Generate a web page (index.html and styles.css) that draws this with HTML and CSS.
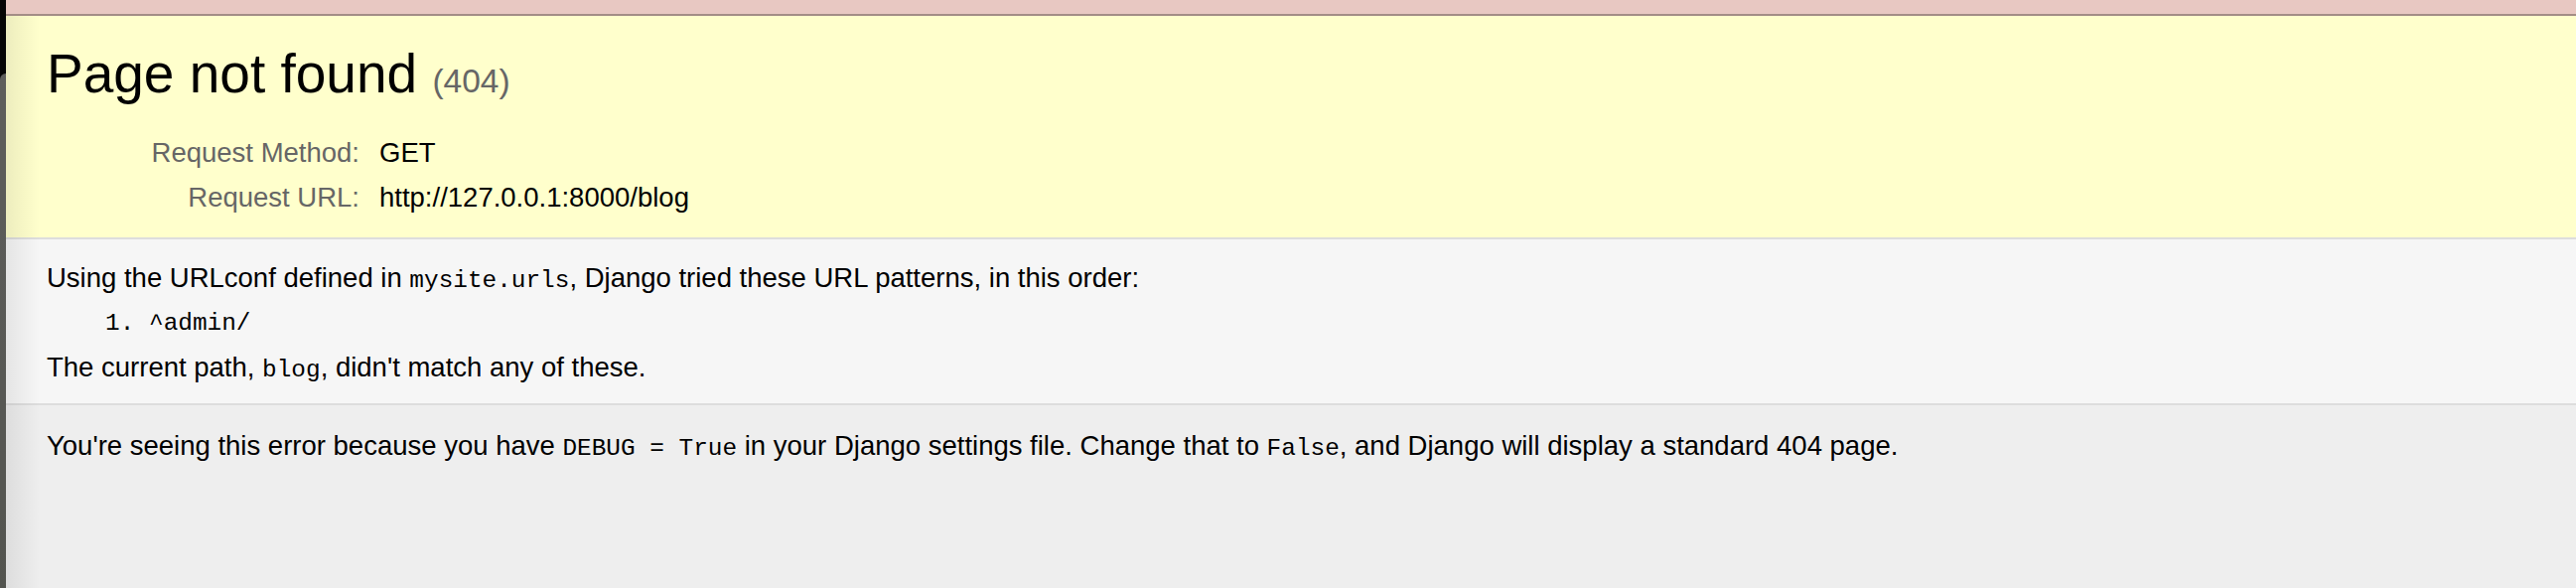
FILE: index.html
```
<!DOCTYPE html>
<html>
<head>
<meta charset="utf-8">
<title>Page not found at /blog</title>
<link rel="stylesheet" href="styles.css">
</head>
<body>
<div class="edge"><div class="edge-window"></div></div>
<div class="edge-shadow"></div>
<div class="topbar"></div>
<div class="summary">
  <h1 class="title">Page not found <span class="code">(404)</span></h1>
  <table class="meta">
    <tr><th>Request Method:</th><td>GET</td></tr>
    <tr><th>Request URL:</th><td>http://127.0.0.1:8000/blog</td></tr>
  </table>
</div>
<div class="info">
  <p class="line">Using the URLconf defined in <code class="mono">mysite.urls</code>, Django tried these URL patterns, in this order:</p>
  <ol class="patterns">
    <li class="pattern">^admin/</li>
  </ol>
  <p class="line">The current path, <code class="mono">blog</code>, didn't match any of these.</p>
</div>
<div class="explanation">
  <p class="line">You're seeing this error because you have <code class="mono">DEBUG = True</code> in your Django settings file. Change that to <code class="mono">False</code>, and Django will display a standard 404 page.</p>
</div>
</body>
</html>
```
FILE: styles.css
```
html, body {
  margin: 0;
  padding: 0;
}
body {
  font-family: "Liberation Sans", Arial, sans-serif;
  font-size: 27.5px;
  color: #000;
  background: #eee;
  height: 592px;
  overflow: hidden;
  position: relative;
}
.edge {
  position: absolute;
  left: 0;
  top: 0;
  width: 6px;
  height: 592px;
  background: #050505;
  z-index: 3;
  overflow: hidden;
}
.edge-window {
  margin-top: 74px;
  height: 518px;
  width: 20px;
  border-top-left-radius: 6px;
  background: linear-gradient(#5e5e5c, #53544f);
}
.edge-shadow {
  position: absolute;
  left: 6px;
  top: 16px;
  width: 34px;
  height: 576px;
  background: linear-gradient(to right, rgba(0,0,0,0.07), rgba(0,0,0,0));
  z-index: 2;
  pointer-events: none;
}
.topbar {
  height: 14px;
  background: #e8c8c2;
  border-bottom: 2px solid #a38d86;
}
.summary {
  background: #ffc;
  padding: 27px 47px 18px;
  border-bottom: 2px solid #ddd;
}
.title {
  margin: 0 0 18px;
  font-size: 55px;
  font-weight: normal;
  line-height: 62px;
}
.code {
  font-size: 33.5px;
  color: #666;
}
.meta {
  border-collapse: collapse;
}
.meta th, .meta td {
  padding: 0;
  height: 45px;
  line-height: 45px;
  vertical-align: top;
  font-size: 27.5px;
}
.meta th {
  width: 315px;
  text-align: right;
  color: #666;
  font-weight: normal;
  padding-right: 20px;
}
.meta td {
  text-align: left;
}
.info {
  background: #f6f6f6;
  padding: 16px 47px 11px;
  border-bottom: 2px solid #ddd;
}
.line {
  margin: 0;
  line-height: 45px;
}
.patterns {
  margin: 0 0 0 103px;
  padding: 0;
  line-height: 42px;
}
.pattern {
  font-family: "Liberation Mono", "Courier New", monospace;
  font-size: 24.4px;
}
.mono {
  font-family: "Liberation Mono", "Courier New", monospace;
  font-size: 24.4px;
}
.explanation {
  background: #eee;
  padding: 18px 47px 0;
}
```
